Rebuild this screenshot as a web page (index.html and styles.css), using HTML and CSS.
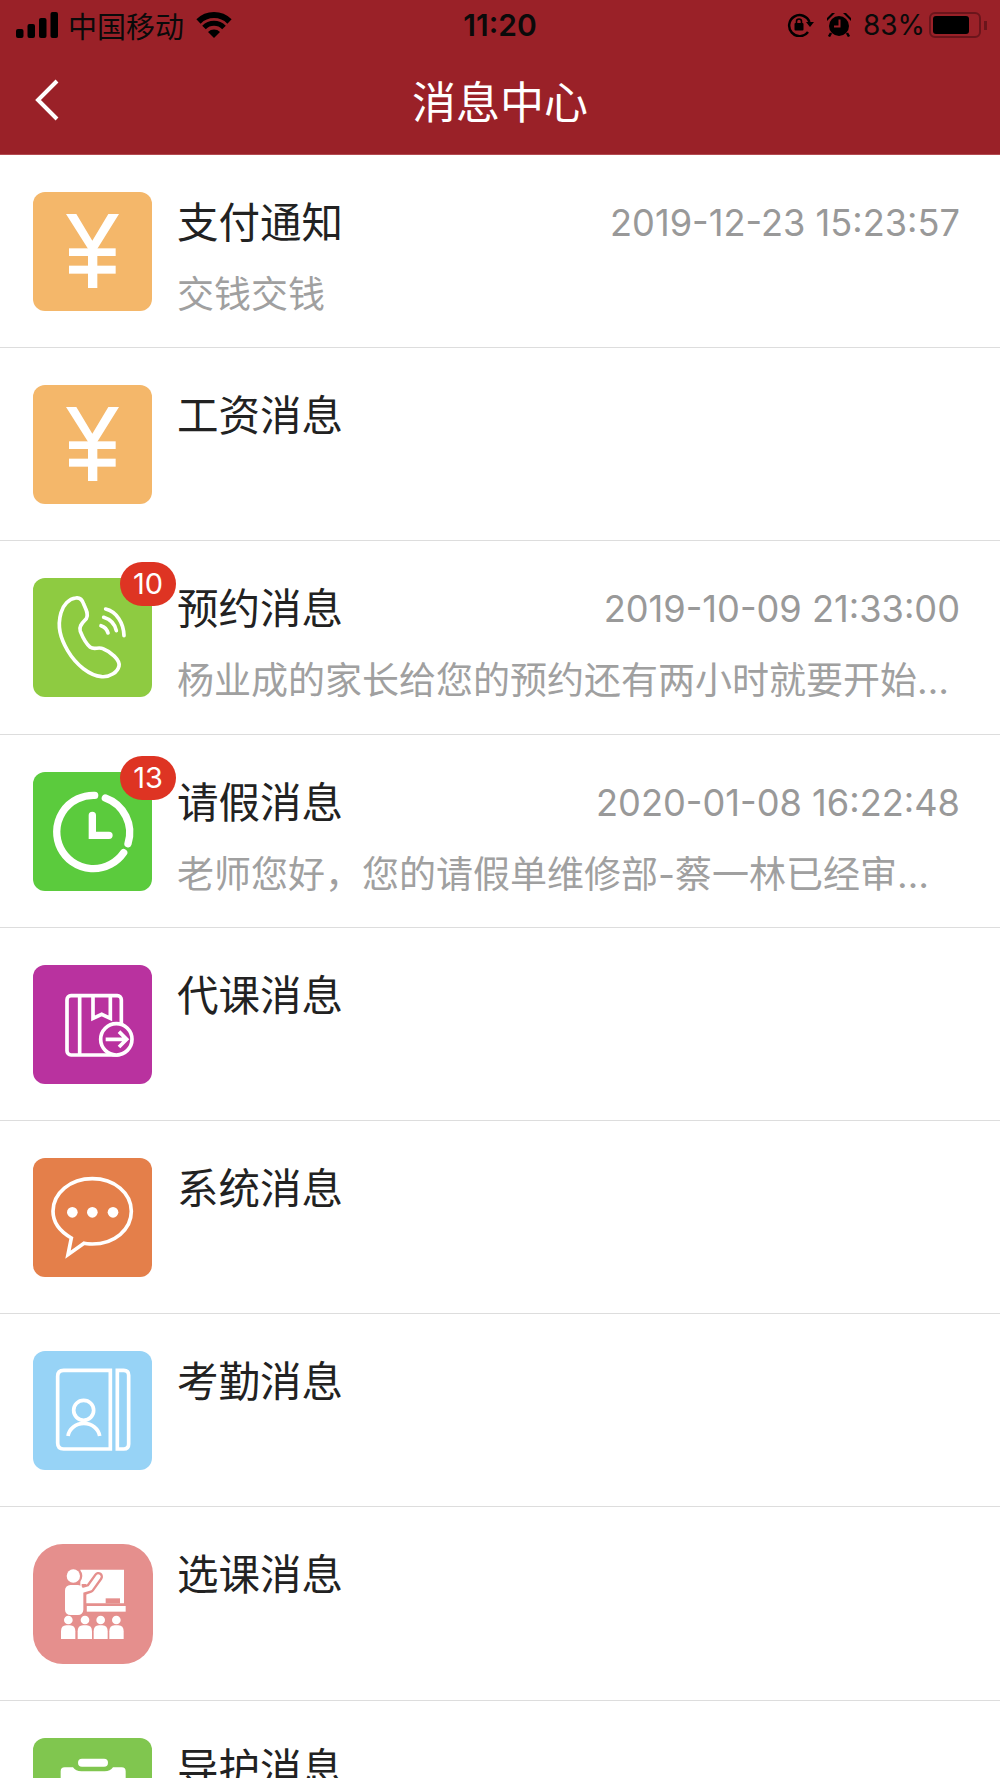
FILE: index.html
```html
<!DOCTYPE html>
<html>
    <head>
        <meta charset="utf-8">
        <title>消息中心</title>
        <link rel="stylesheet" href="styles.css">
    </head>
    <body>
        <div class="page">
            <header class="top">
                <div class="status">
                    <div class="status-left">
                        <svg class="signal" width="42" height="26" viewBox="0 0 42 26">
                            <rect x="0" y="17" width="7.5" height="9" rx="2"/>
                            <rect x="11.5" y="12" width="7.5" height="14" rx="2"/>
                            <rect x="23" y="6" width="7.5" height="20" rx="2"/>
                            <rect x="34.5" y="0" width="7.5" height="26" rx="2"/>
                        </svg>
                        <span class="carrier">中国移动</span>
                        <svg class="wifi" width="36" height="26" viewBox="0 0 36 26">
                            <path d="M2.5 9.5 A22 22 0 0 1 33.5 9.5" fill="none" stroke="#000" stroke-width="6"/>
                            <path d="M8 15.5 A14 14 0 0 1 28 15.5" fill="none" stroke="#000" stroke-width="5"/>
                            <path d="M12 20 A8.5 8.5 0 0 1 24 20 L18 26 Z"/>
                        </svg>
                    </div>
                    <div class="clock">11:20</div>
                    <div class="status-right">
                        <svg width="27" height="24" viewBox="0 0 27 24">
                            <path d="M21 19 A10.5 10.5 0 1 1 22.5 9" fill="none" stroke="#000" stroke-width="2.5"/>
                            <path d="M19 9 H27 L23 14 Z"/>
                            <rect x="7.5" y="10" width="9" height="7.5" rx="1"/>
                            <path d="M9.5 10 V8.5 A2.5 2.5 0 0 1 14.5 8.5 V10" fill="none" stroke="#000" stroke-width="1.6"/>
                        </svg>
                        <svg class="alarm" width="24" height="24" viewBox="0 0 24 24">
                            <circle cx="12" cy="13" r="10"/>
                            <path d="M0 5 L5 0 H8 L0 8 Z M24 5 L19 0 H16 L24 8 Z"/>
                            <path d="M4 20 L2 23.5 M20 20 L22 23.5" stroke="#000" stroke-width="2.5"/>
                            <path d="M12.5 6.5 V13.5 H7" fill="none" stroke="#9a2128" stroke-width="2"/>
                        </svg>
                        <span class="percent">83%</span>
                        <div class="battery"><div class="battery-level"></div></div>
                        <div class="battery-tip"></div>
                    </div>
                </div>
                <div class="nav">
                    <div class="nav-side">
                        <svg width="24" height="42" viewBox="0 0 24 42">
                            <path d="M22 2 L3 21 L22 40" fill="none" stroke="#fff" stroke-width="4"/>
                        </svg>
                    </div>
                    <h1 class="nav-title">消息中心</h1>
                    <div class="nav-side"></div>
                </div>
            </header>

            <ul class="list">
                <li class="item">
                    <div class="icon bg-yellow">
                        <svg viewBox="0 0 357 357"><use href="#yen"/></svg>
                    </div>
                    <div class="text">
                        <div class="line">
                            <span class="name">支付通知</span>
                            <span class="time">2019-12-23 15:23:57</span>
                        </div>
                        <div class="desc">交钱交钱</div>
                    </div>
                </li>
                <li class="item">
                    <div class="icon bg-yellow">
                        <svg viewBox="0 0 357 357"><use href="#yen"/></svg>
                    </div>
                    <div class="text">
                        <div class="line"><span class="name">工资消息</span></div>
                    </div>
                </li>
                <li class="item">
                    <div class="icon bg-lime">
                        <svg viewBox="0 0 357 357">
                            <path class="line-w" d="M128 60 C140 58 148 66 152 78 C158 92 168 108 160 122 C152 132 136 142 142 160 C150 180 160 198 172 208 C184 216 196 206 210 212 C232 220 262 246 258 264 C254 282 232 298 206 296 C170 292 130 262 104 218 C82 180 72 146 84 104 C90 82 108 62 128 60 Z"/>
                            <path class="line-w round" d="M218 93 C250 100 272 135 273 173"/>
                            <path class="line-w round" d="M212 118 C232 124 246 140 250 158"/>
                            <path class="line-w round" d="M204 143 C214 146 222 154 225 165"/>
                        </svg>
                        <span class="badge">10</span>
                    </div>
                    <div class="text">
                        <div class="line">
                            <span class="name">预约消息</span>
                            <span class="time">2019-10-09 21:33:00</span>
                        </div>
                        <div class="desc">杨业成的家长给您的预约还有两小时就要开始了，请准时到场</div>
                    </div>
                </li>
                <li class="item">
                    <div class="icon bg-green">
                        <svg viewBox="0 0 357 357">
                            <path class="line-w round thick" d="M185 70 A110 110 0 1 0 272 242"/>
                            <path class="line-w round thick" d="M217 78 A110 110 0 0 1 285 215"/>
                            <path class="line-w round thick" d="M178 130 V190 H228"/>
                        </svg>
                        <span class="badge">13</span>
                    </div>
                    <div class="text">
                        <div class="line">
                            <span class="name">请假消息</span>
                            <span class="time">2020-01-08 16:22:48</span>
                        </div>
                        <div class="desc">老师您好，您的请假单维修部-蔡一林已经审批通过</div>
                    </div>
                </li>
                <li class="item">
                    <div class="icon bg-purple">
                        <svg viewBox="0 0 357 357">
                            <rect class="line-w" x="102" y="92" width="163" height="178" rx="12"/>
                            <path class="line-w" d="M140 92 V270"/>
                            <path class="line-w" d="M180 92 V160 L206 148 L232 160 V92"/>
                            <circle class="line-w purple-fill" cx="250" cy="223" r="47"/>
                            <path class="line-w" d="M218 223 H280 M258 200 L281 223 L258 246"/>
                        </svg>
                    </div>
                    <div class="text">
                        <div class="line"><span class="name">代课消息</span></div>
                    </div>
                </li>
                <li class="item">
                    <div class="icon bg-orange">
                        <svg viewBox="0 0 357 357">
                            <path class="line-w" d="M115 240 C80 220 60 195 60 160 C60 105 112 62 178 62 C244 62 295 105 295 160 C295 215 244 258 178 258 C170 258 160 258 153 256 L105 290 Z"/>
                            <circle class="dot" cx="118" cy="163" r="16"/>
                            <circle class="dot" cx="178" cy="163" r="16"/>
                            <circle class="dot" cx="240" cy="163" r="16"/>
                        </svg>
                    </div>
                    <div class="text">
                        <div class="line"><span class="name">系统消息</span></div>
                    </div>
                </li>
                <li class="item">
                    <div class="icon bg-blue">
                        <svg viewBox="0 0 357 357">
                            <path class="line-w" d="M232 58 H92 Q74 58 74 76 V276 Q74 294 92 294 H232 Z"/>
                            <path class="line-w" d="M253 58 H272 Q287 58 287 73 V279 Q287 294 272 294 H253 Z"/>
                            <circle class="line-w" cx="152" cy="178" r="30"/>
                            <path class="line-w" d="M105 255 A48 44 0 0 1 200 255"/>
                        </svg>
                    </div>
                    <div class="text">
                        <div class="line"><span class="name">考勤消息</span></div>
                    </div>
                </li>
                <li class="item">
                    <div class="icon icon-round bg-pink">
                        <svg viewBox="0 0 357 357">
                            <path class="dot" d="M142 77 H273 V178 H150 V130 H142 Z"/>
                            <rect class="tab" x="218" y="163" width="43" height="15"/>
                            <rect class="dot" x="161" y="186" width="117" height="17"/>
                            <path class="arm-gap" d="M156 138 L171 133 L196 98"/>
                            <rect class="gap" x="146" y="120" width="14" height="98"/>
                            <circle class="gap" cx="121" cy="96" r="27"/>
                            <circle class="dot" cx="121" cy="96" r="20"/>
                            <rect class="dot" x="96" y="123" width="55" height="90" rx="16"/>
                            <path class="arm" d="M145 140 L171 133 L196 98"/>
                            <circle class="dot" cx="106" cy="228" r="13"/>
                            <circle class="dot" cx="156" cy="228" r="13"/>
                            <circle class="dot" cx="203" cy="228" r="13"/>
                            <circle class="dot" cx="250" cy="228" r="13"/>
                            <path class="dot" d="M84 285 V262 Q84 244 100 244 H111 Q127 244 127 262 V285 Z"/>
                            <path class="dot" d="M134 285 V262 Q134 244 150 244 H161 Q177 244 177 262 V285 Z"/>
                            <path class="dot" d="M182 285 V262 Q182 244 198 244 H208 Q224 244 224 262 V285 Z"/>
                            <path class="dot" d="M229 285 V262 Q229 244 245 244 H256 Q272 244 272 262 V285 Z"/>
                        </svg>
                    </div>
                    <div class="text">
                        <div class="line"><span class="name">选课消息</span></div>
                    </div>
                </li>
                <li class="item">
                    <div class="icon bg-grass">
                        <svg viewBox="0 0 357 357">
                            <rect class="dot" x="135" y="62" width="90" height="24" rx="12"/>
                            <path class="dot" d="M83 100 Q83 88 95 88 H120 Q128 100 145 100 H215 Q232 100 240 88 H266 Q278 88 278 100 V300 H83 Z"/>
                        </svg>
                    </div>
                    <div class="text">
                        <div class="line"><span class="name">导护消息</span></div>
                    </div>
                </li>
            </ul>

            <!-- 인민폐 아이콘은 두 줄에서 같이 쓴다 -->
            <svg class="defs" width="0" height="0">
                <g id="yen" fill="#fff">
                    <path d="M99 66 H130 L178 146 L226 66 H258 L193 170 V288 H165 V170 Z"/>
                    <rect x="108" y="169" width="140" height="23"/>
                    <rect x="108" y="221" width="140" height="24"/>
                </g>
            </svg>
        </div>
    </body>
</html>
```
FILE: styles.css
```css
* {
    margin: 0;
    padding: 0;
    box-sizing: border-box;
}
html, body {
    height: 1778px;
    overflow: hidden;
    background: #fff;
}
body {
    font-family: "Inter", "Noto Sans CJK SC", sans-serif;
}
.page {
    height: 1778px;
    overflow: hidden;
}

/* 상단 빨간 영역 */
.top {
    height: 155px;
    background: #9a2128;
    border-bottom: 1px solid #b34a50;
}
.status {
    height: 50px;
    display: grid;
    grid-template-columns: 1fr auto 1fr;
    align-items: center;
    color: #0a0a0a;
}
.status-left {
    display: flex;
    align-items: center;
    padding-left: 16px;
}
.carrier {
    font-size: 29px;
    margin-left: 10px;
}
.wifi {
    margin-left: 12px;
}
.clock {
    font-size: 30px;
    font-weight: 600;
}
.status-right {
    display: flex;
    align-items: center;
    justify-content: flex-end;
    padding-right: 13px;
}
.alarm {
    margin-left: 13px;
}
.percent {
    font-size: 28px;
    margin-left: 12px;
}
.battery {
    width: 52px;
    height: 26px;
    margin-left: 4px;
    border: 2px solid #6b151b;
    border-radius: 6px;
    padding: 2px;
}
.battery-level {
    width: 36px;
    height: 18px;
    background: #000;
    border-radius: 3px;
}
.battery-tip {
    width: 3px;
    height: 9px;
    margin-left: 3px;
    background: #6b151b;
}
.nav {
    height: 100px;
    display: grid;
    grid-template-columns: 1fr auto 1fr;
    align-items: center;
}
.nav-side {
    display: flex;
    padding-left: 35px;
}
.nav-title {
    font-size: 44px;
    font-weight: normal;
    color: #fff;
}

/* 메시지 목록 */
.list {
    list-style: none;
}
.item {
    height: 193.2px;
    display: flex;
    padding: 37px 40px 0 33px;
    border-bottom: 1px solid #ddd;
}
.icon {
    position: relative;
    width: 119px;
    height: 119px;
    flex-shrink: 0;
    margin-right: 25px;
    border-radius: 12px;
}
.icon svg {
    display: block;
    width: 119px;
    height: 119px;
}
.icon-round {
    width: 120px;
    height: 120px;
    margin-right: 24px;
    border-radius: 30px;
}
.bg-yellow { background: #f4b76a; }
.bg-lime { background: #8ecb41; }
.bg-green { background: #5bcb3d; }
.bg-purple { background: #b9329f; }
.bg-orange { background: #e47f4a; }
.bg-blue { background: #97d3f6; }
.bg-pink { background: #e58f8d; }
.bg-grass { background: #80c64f; }

/* svg 선 스타일 (viewBox 357 기준) */
.line-w {
    fill: none;
    stroke: #fff;
    stroke-width: 11;
}
.round {
    stroke-linecap: round;
}
.thick {
    stroke-width: 22;
}
.purple-fill {
    fill: #b9329f;
}
.dot {
    fill: #fff;
}
.tab, .gap {
    fill: #e58f8d;
}
.arm-gap {
    fill: none;
    stroke: #e58f8d;
    stroke-width: 28;
    stroke-linecap: round;
    stroke-linejoin: round;
}
.arm {
    fill: none;
    stroke: #fff;
    stroke-width: 14;
    stroke-linecap: round;
    stroke-linejoin: round;
}
.badge {
    position: absolute;
    left: 87px;
    top: -16px;
    width: 56px;
    height: 44px;
    border-radius: 22px;
    background: #de3423;
    color: #fff;
    font-size: 29px;
    line-height: 44px;
    text-align: center;
}
.text {
    flex: 1;
    min-width: 0;
}
.line {
    display: flex;
    justify-content: space-between;
    align-items: center;
    height: 56px;
}
.name {
    font-size: 41.5px;
    color: #222;
}
.time {
    margin-top: 6px;
    font-size: 36.2px;
    color: #999;
}
.desc {
    margin-top: 21px;
    font-size: 37px;
    line-height: 52px;
    color: #a0a0a0;
    white-space: nowrap;
    overflow: hidden;
    text-overflow: ellipsis;
}
.defs {
    position: absolute;
}
```
